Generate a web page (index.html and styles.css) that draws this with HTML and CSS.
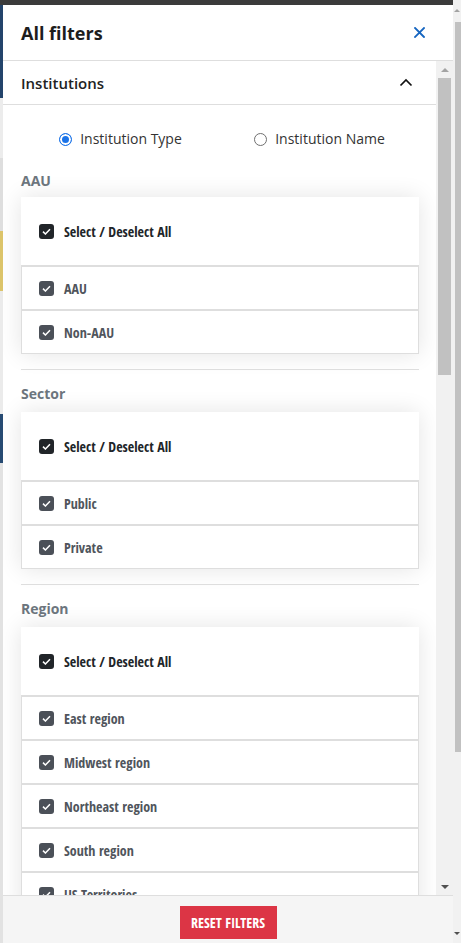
FILE: index.html
```html
<!DOCTYPE html>
<html lang="en">
<head>
<meta charset="utf-8">
<title>All filters</title>
<link rel="stylesheet" href="styles.css">
</head>
<body>
<div class="app">
  <div class="page">
    <div class="topbar"></div>
    <div class="page-main">
      <div class="backdrop">
        <div class="bd bd-blue"></div>
        <div class="bd bd-light"></div>
        <div class="bd bd-gray"></div>
        <div class="bd bd-yellow"></div>
        <div class="bd bd-light2"></div>
        <div class="bd bd-blue2"></div>
        <div class="bd bd-rest"></div>
      </div>
      <aside class="drawer">
        <header class="drawer-head">
          <h1 class="drawer-title">All filters</h1>
          <button class="close-btn" aria-label="Close">
            <svg width="11" height="11" viewBox="0 0 11 11"><path d="M1 1 L10 10 M10 1 L1 10" stroke="#1565c0" stroke-width="1.8" fill="none" stroke-linecap="square"/></svg>
          </button>
        </header>
        <div class="drawer-body">
          <div class="scroll-content">
            <div class="section-head">
              <span class="section-title">Institutions</span>
              <svg class="chevron" width="14" height="9" viewBox="0 0 14 9"><path d="M1.5 7.5 L7 2 L12.5 7.5" stroke="#111" stroke-width="1.7" fill="none"/></svg>
            </div>
            <div class="section-body">
              <div class="radios">
                <label class="radio-opt"><span class="radio checked"></span><span class="radio-label">Institution Type</span></label>
                <label class="radio-opt"><span class="radio"></span><span class="radio-label">Institution Name</span></label>
              </div>

              <div class="group first">
                <div class="group-title">AAU</div>
                <div class="card">
                  <div class="row all"><span class="cb dark"><svg width="9" height="7" viewBox="0 0 9 7"><path d="M1 3.6 L3.4 6 L8 1.2" stroke="#fff" stroke-width="1.5" fill="none"/></svg></span><span class="row-label">Select / Deselect All</span></div>
                  <div class="row item"><span class="cb"><svg width="9" height="7" viewBox="0 0 9 7"><path d="M1 3.6 L3.4 6 L8 1.2" stroke="#fff" stroke-width="1.5" fill="none"/></svg></span><span class="row-label">AAU</span></div>
                  <div class="row item"><span class="cb"><svg width="9" height="7" viewBox="0 0 9 7"><path d="M1 3.6 L3.4 6 L8 1.2" stroke="#fff" stroke-width="1.5" fill="none"/></svg></span><span class="row-label">Non-AAU</span></div>
                </div>
              </div>

              <div class="group">
                <div class="group-title">Sector</div>
                <div class="card">
                  <div class="row all"><span class="cb dark"><svg width="9" height="7" viewBox="0 0 9 7"><path d="M1 3.6 L3.4 6 L8 1.2" stroke="#fff" stroke-width="1.5" fill="none"/></svg></span><span class="row-label">Select / Deselect All</span></div>
                  <div class="row item"><span class="cb"><svg width="9" height="7" viewBox="0 0 9 7"><path d="M1 3.6 L3.4 6 L8 1.2" stroke="#fff" stroke-width="1.5" fill="none"/></svg></span><span class="row-label">Public</span></div>
                  <div class="row item"><span class="cb"><svg width="9" height="7" viewBox="0 0 9 7"><path d="M1 3.6 L3.4 6 L8 1.2" stroke="#fff" stroke-width="1.5" fill="none"/></svg></span><span class="row-label">Private</span></div>
                </div>
              </div>

              <div class="group">
                <div class="group-title">Region</div>
                <div class="card">
                  <div class="row all"><span class="cb dark"><svg width="9" height="7" viewBox="0 0 9 7"><path d="M1 3.6 L3.4 6 L8 1.2" stroke="#fff" stroke-width="1.5" fill="none"/></svg></span><span class="row-label">Select / Deselect All</span></div>
                  <div class="row item"><span class="cb"><svg width="9" height="7" viewBox="0 0 9 7"><path d="M1 3.6 L3.4 6 L8 1.2" stroke="#fff" stroke-width="1.5" fill="none"/></svg></span><span class="row-label">East region</span></div>
                  <div class="row item"><span class="cb"><svg width="9" height="7" viewBox="0 0 9 7"><path d="M1 3.6 L3.4 6 L8 1.2" stroke="#fff" stroke-width="1.5" fill="none"/></svg></span><span class="row-label">Midwest region</span></div>
                  <div class="row item"><span class="cb"><svg width="9" height="7" viewBox="0 0 9 7"><path d="M1 3.6 L3.4 6 L8 1.2" stroke="#fff" stroke-width="1.5" fill="none"/></svg></span><span class="row-label">Northeast region</span></div>
                  <div class="row item"><span class="cb"><svg width="9" height="7" viewBox="0 0 9 7"><path d="M1 3.6 L3.4 6 L8 1.2" stroke="#fff" stroke-width="1.5" fill="none"/></svg></span><span class="row-label">South region</span></div>
                  <div class="row item"><span class="cb"><svg width="9" height="7" viewBox="0 0 9 7"><path d="M1 3.6 L3.4 6 L8 1.2" stroke="#fff" stroke-width="1.5" fill="none"/></svg></span><span class="row-label">US Territories</span></div>
                </div>
              </div>
            </div>
          </div>
          <div class="scrollbar">
            <span class="sb-btn"><span class="tri-up light"></span></span>
            <div class="sb-track"><div class="sb-thumb"></div></div>
            <span class="sb-btn"><span class="tri-down"></span></span>
          </div>
        </div>
        <footer class="drawer-foot">
          <button class="reset-btn">RESET FILTERS</button>
        </footer>
      </aside>
    </div>
  </div>
  <div class="winscroll">
    <span class="ws-btn"><span class="tri-up small"></span></span>
    <div class="ws-track"><div class="ws-thumb"></div></div>
    <span class="ws-btn"><span class="tri-down small"></span></span>
  </div>
</div>
</body>
</html>
```

FILE: styles.css
```css
* { box-sizing: border-box; }
html, body { margin: 0; padding: 0; }
body {
  font-family: "Open Sans", "Liberation Sans", sans-serif;
  color: #212529;
  background: #e6e6e6;
}
.app {
  display: flex;
  width: 461px;
  height: 943px;
  overflow: hidden;
}
.page {
  flex: 1;
  display: flex;
  flex-direction: column;
  min-width: 0;
}
.topbar {
  height: 5px;
  background: #3b3b3b;
  flex: none;
}
.page-main {
  flex: 1;
  display: flex;
  min-height: 0;
}
.backdrop {
  width: 3px;
  flex: none;
  display: flex;
  flex-direction: column;
  background: #e4e4e4;
}
.bd { flex: none; }
.bd-blue { height: 93px; background: #23446b; }
.bd-light { height: 60px; background: #ececec; }
.bd-gray { height: 73px; background: #dedede; }
.bd-yellow { height: 60px; background: #dcc46a; }
.bd-light2 { height: 123px; background: #ebebeb; }
.bd-blue2 { height: 49px; background: #264a72; }
.bd-rest { flex: 1; background: #e2e2e2; }

/* drawer */
.drawer {
  width: 450px;
  flex: none;
  display: flex;
  flex-direction: column;
  background: #fff;
}
.drawer-head {
  height: 56px;
  flex: none;
  display: flex;
  align-items: center;
  justify-content: space-between;
  padding: 0 28px 0 18px;
  border-bottom: 1px solid #dedede;
}
.drawer-title {
  margin: 0;
  font-size: 18px;
  font-weight: 700;
  color: #1d1d1d;
  line-height: 24px;
}
.close-btn {
  border: 0;
  background: none;
  padding: 0;
  width: 11px;
  height: 11px;
  display: flex;
}
.drawer-body {
  flex: 1;
  min-height: 0;
  display: flex;
}
.scroll-content {
  flex: 1;
  min-width: 0;
  overflow: hidden;
}
.section-head {
  height: 44px;
  display: flex;
  align-items: center;
  justify-content: space-between;
  padding: 0 23px 0 18px;
  border-bottom: 1px solid #dedede;
}
.section-title {
  font-size: 15px;
  font-weight: 600;
  color: #222;
}
.section-body {
  padding: 0 17px 0 18px;
}
.radios {
  display: grid;
  grid-template-columns: 1fr 1fr;
  justify-items: center;
  margin-top: 24px;
  height: 20px;
}
.radio-opt {
  display: flex;
  align-items: center;
  gap: 8px;
}
.radio {
  width: 13px;
  height: 13px;
  border-radius: 50%;
  border: 1px solid #6f6f6f;
  background: #fff;
  flex: none;
}
.radio.checked {
  border: 1.5px solid #1a73e8;
  background: #1a73e8;
  box-shadow: inset 0 0 0 2px #fff;
}
.radio-label {
  font-size: 14px;
  color: #333;
  line-height: 20px;
}
.group-title {
  font-size: 14px;
  font-weight: 700;
  color: #6c757d;
  line-height: 20px;
  margin: 14px 0 8px;
}
.group.first .group-title { margin-top: 22px; margin-bottom: 6px; }
.group + .group {
  border-top: 1px solid #dedede;
  margin-top: 15px;
}
.card {
  background: #fff;
  box-shadow: 0 0 22px rgba(0, 0, 0, 0.11);
}
.row {
  display: flex;
  align-items: center;
  gap: 10px;
  padding-left: 18px;
}
.row.all {
  height: 69px;
  border-bottom: 1px solid #dedede;
}
.row.item {
  height: 44px;
  border: 1px solid #dedede;
  padding-left: 17px;
}
.cb {
  width: 15px;
  height: 15px;
  border-radius: 3px;
  background: #4b5058;
  display: flex;
  align-items: center;
  justify-content: center;
  flex: none;
}
.cb.dark { background: #212529; }
.row-label {
  font-family: "Open Sans Condensed", "Open Sans", "Liberation Sans Narrow", sans-serif;
  font-stretch: condensed;
  font-size: 14px;
  font-weight: 700;
  color: #50555c;
}
.row.all .row-label { color: #212529; }

/* inner scrollbar */
.scrollbar {
  width: 17px;
  flex: none;
  background: #f1f1f1;
  display: flex;
  flex-direction: column;
}
.sb-btn {
  height: 17px;
  flex: none;
  display: flex;
  align-items: center;
  justify-content: center;
}
.sb-track {
  flex: 1;
  padding: 0 2px;
}
.sb-thumb {
  height: 297px;
  background: #c1c1c1;
}
.tri-up {
  width: 0; height: 0;
  border-left: 4px solid transparent;
  border-right: 4px solid transparent;
  border-bottom: 4px solid #505050;
}
.tri-up.light { border-bottom-color: #a3a3a3; }
.tri-down {
  width: 0; height: 0;
  border-left: 4px solid transparent;
  border-right: 4px solid transparent;
  border-top: 4px solid #505050;
}
.tri-up.small { border-left-width: 3px; border-right-width: 3px; border-bottom-width: 3px; border-bottom-color: #a3a3a3; }
.tri-down.small { border-left-width: 3px; border-right-width: 3px; border-top-width: 3px; }

/* footer */
.drawer-foot {
  height: 48px;
  flex: none;
  background: #f5f5f5;
  border-top: 1px solid #dedede;
  display: flex;
  justify-content: center;
  padding-top: 10px;
}
.reset-btn {
  width: 97px;
  height: 33px;
  border: 0;
  border-radius: 0;
  background: #dc3545;
  color: #fff;
  font-family: "Open Sans Condensed", "Open Sans", "Liberation Sans Narrow", sans-serif;
  font-stretch: condensed;
  font-size: 14px;
  font-weight: 700;
  padding: 0;
}

/* window scrollbar */
.winscroll {
  width: 8px;
  flex: none;
  background: #f1f1f1;
  display: flex;
  flex-direction: column;
}
.ws-btn {
  height: 20px;
  flex: none;
  display: flex;
  align-items: center;
  justify-content: flex-end;
  padding-right: 1px;
}
.ws-track {
  flex: 1;
  padding-left: 2px;
}
.ws-thumb {
  height: 730px;
  margin-top: 2px;
  background: #c1c1c1;
}
```
